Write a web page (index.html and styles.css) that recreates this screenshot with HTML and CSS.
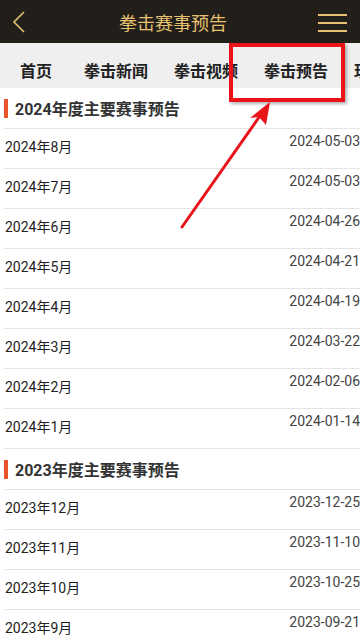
FILE: index.html
```html
<!DOCTYPE html>
<html lang="zh-CN">
<head>
    <meta charset="UTF-8">
    <title>拳击赛事预告</title>
    <link rel="stylesheet" href="styles.css">
</head>
<body>
<div class="page">
  <header class="topbar">
    <svg class="back" width="16" height="24" viewBox="0 0 16 24">
      <polyline points="12,2 2,12 12,22" fill="none" stroke="#e6c270" stroke-width="1.6"/>
    </svg>
    <h1 class="title">拳击赛事预告</h1>
    <div class="menu">
      <span></span><span></span><span></span>
    </div>
  </header>

  <nav class="tabs">
    <a class="tab">首页</a>
    <a class="tab">拳击新闻</a>
    <a class="tab">拳击视频</a>
    <a class="tab">拳击预告</a>
    <a class="tab">现役拳手</a>
  </nav>

  <section class="block">
    <h2 class="sec-title">2024年度主要赛事预告</h2>
    <ul class="list">
      <li class="row"><span class="name">2024年8月</span><span class="date">2024-05-03</span></li>
      <li class="row"><span class="name">2024年7月</span><span class="date">2024-05-03</span></li>
      <li class="row"><span class="name">2024年6月</span><span class="date">2024-04-26</span></li>
      <li class="row"><span class="name">2024年5月</span><span class="date">2024-04-21</span></li>
      <li class="row"><span class="name">2024年4月</span><span class="date">2024-04-19</span></li>
      <li class="row"><span class="name">2024年3月</span><span class="date">2024-03-22</span></li>
      <li class="row"><span class="name">2024年2月</span><span class="date">2024-02-06</span></li>
      <li class="row"><span class="name">2024年1月</span><span class="date">2024-01-14</span></li>
    </ul>
  </section>

  <section class="block">
    <h2 class="sec-title">2023年度主要赛事预告</h2>
    <ul class="list">
      <li class="row"><span class="name">2023年12月</span><span class="date">2023-12-25</span></li>
      <li class="row"><span class="name">2023年11月</span><span class="date">2023-11-10</span></li>
      <li class="row"><span class="name">2023年10月</span><span class="date">2023-10-25</span></li>
      <li class="row"><span class="name">2023年9月</span><span class="date">2023-09-21</span></li>
    </ul>
  </section>

  <!-- annotation drawn on top of the screenshot -->
  <div class="mark-box"></div>
  <svg class="mark-arrow" width="360" height="640" viewBox="0 0 360 640">
    <line x1="182" y1="227" x2="262" y2="113" stroke="#e8141a" stroke-width="3" stroke-linecap="round"/>
    <polygon points="270,102 266,125 259,117 250,118" fill="#e8141a"/>
  </svg>
</div>
</body>
</html>
```

FILE: styles.css
```css
body {
  margin: 0;
  background: #fff;
  font-family: Roboto, "Noto Sans CJK SC", sans-serif;
}

.page {
  position: relative;
  width: 360px;
  height: 640px;
  overflow: hidden;
}

.topbar {
  height: 43px;
  background: #221e1a;
  display: flex;
  align-items: center;
  justify-content: space-between;
  padding: 0 13px 0 12px;
}

.back {
  display: block;
}

.title {
  margin: 0;
  font-size: 18px;
  font-weight: normal;
  color: #e6c270;
}

.menu {
  width: 29px;
  display: flex;
  flex-direction: column;
  gap: 6px;
  margin-top: 2px;
}

.menu span {
  display: block;
  height: 2px;
  background: #e6c270;
}

.tabs {
  height: 45px;
  background: #efefef;
  display: flex;
  align-items: center;
  gap: 26px;
  padding: 8px 0 0 20px;
  box-sizing: border-box;
  white-space: nowrap;
  overflow: hidden;
}

.tab {
  flex: none;
  font-size: 16px;
  font-weight: bold;
  color: #222;
}

.tab:first-child {
  margin-right: 6px;
}

.sec-title {
  margin: 0 0 0 4px;
  height: 40px;
  display: flex;
  align-items: center;
  font-size: 16px;
  font-weight: bold;
  color: #333;
  border-bottom: 1px solid #e4e4e4;
}

.sec-title::before {
  content: "";
  width: 4px;
  height: 19px;
  background: #e8552a;
  margin-right: 7px;
}

.list {
  list-style: none;
  margin: 0 0 0 4px;
  padding: 0;
}

.row {
  height: 39px;
  display: flex;
  justify-content: space-between;
  align-items: flex-start;
  border-bottom: 1px solid #e4e4e4;
  padding-left: 1px;
  font-size: 14px;
  line-height: 20px;
}

.name {
  padding-top: 8px;
  color: #222;
}

.date {
  padding-top: 2px;
  color: #444;
}

.mark-box {
  position: absolute;
  left: 229px;
  top: 43px;
  width: 116px;
  height: 59px;
  box-sizing: border-box;
  border: 4px solid #e8141a;
  box-shadow: 2px 2px 3px rgba(0, 0, 0, 0.3);
}

.mark-arrow {
  position: absolute;
  left: 0;
  top: 0;
  pointer-events: none;
}
```
